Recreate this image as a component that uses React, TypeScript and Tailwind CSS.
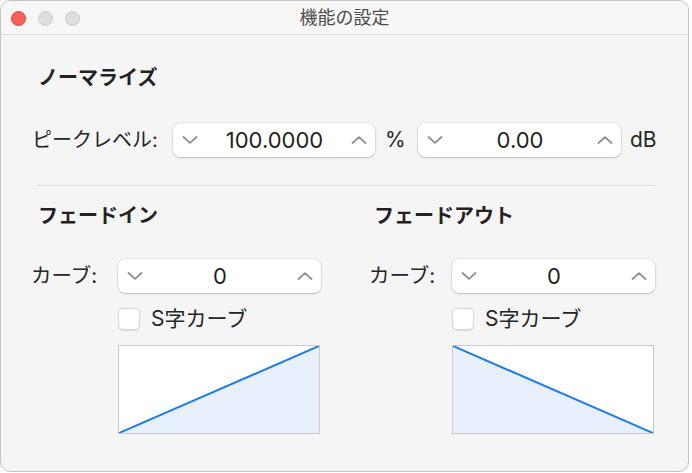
import React from 'react';

const font = { fontFamily: 'Inter, "Noto Sans CJK JP", sans-serif' };

function Chevron({ up }: { up?: boolean }) {
  return (
    <svg viewBox="0 0 16 8" className="w-4 h-2" fill="none">
      <path
        d={up ? 'M1.5 7L8 1.2 14.5 7' : 'M1.5 1L8 6.8 14.5 1'}
        stroke="#8e8e8e"
        strokeWidth="1.8"
        strokeLinecap="round"
        strokeLinejoin="round"
      />
    </svg>
  );
}

function Stepper({ value, width }: { value: string; width: string }) {
  return (
    <div
      className={`${width} h-[34px] bg-white rounded-[7px] flex items-center justify-between pl-[9px] pr-[8px] shadow-[0_0_0_0.5px_rgba(0,0,0,0.12),0_1px_2px_rgba(0,0,0,0.18)]`}
    >
      <Chevron />
      <span className="text-[22px] text-[#1f1f1f] leading-none">{value}</span>
      <Chevron up />
    </div>
  );
}

function Graph({ rising }: { rising?: boolean }) {
  return (
    <div className="w-[202px] h-[89px] border-[1.5px] border-[#c9c9c9] bg-white">
      <svg viewBox="0 0 199 86" className="w-full h-full block" preserveAspectRatio="none">
        <polygon
          points={rising ? '0,86 199,0 199,86' : '0,0 199,86 0,86'}
          fill="#e8f0fd"
        />
        <line
          x1="0"
          y1={rising ? 86 : 0}
          x2="199"
          y2={rising ? 0 : 86}
          stroke="#1b7bf4"
          strokeWidth="2"
        />
      </svg>
    </div>
  );
}

function FadeColumn({
  title,
  headingOffset,
  labelWidth,
  bodyOffset,
  rising,
}: {
  title: string;
  headingOffset: string;
  labelWidth: string;
  bodyOffset: string;
  rising?: boolean;
}) {
  return (
    <div className="flex flex-col">
      <h3 className={`${headingOffset} text-[20px] font-bold leading-[24px] text-[#222]`}>{title}</h3>
      <div className="flex items-center mt-[31px]">
        <span className={`${labelWidth} text-[20.5px] text-[#262626]`}>カーブ:</span>
        <Stepper value="0" width="w-[203px]" />
      </div>
      <div className={`flex flex-col ${bodyOffset}`}>
        <label className="flex items-center mt-[15px] h-[22px]">
          <span className="w-[22px] h-[22px] bg-white rounded-[5px] border border-[#d6d6d6] shadow-[0_0.5px_1px_rgba(0,0,0,0.1)]" />
          <span className="ml-[11px] text-[21px] text-[#262626]">S字カーブ</span>
        </label>
        <div className="mt-[15px]">
          <Graph rising={rising} />
        </div>
      </div>
    </div>
  );
}

export default function App() {
  return (
    <div className="w-[692px] h-[473px] bg-white" style={font}>
      <div className="w-[689px] h-[472px] rounded-[10px] border border-[#c4c4c4] bg-[#f5f5f5] overflow-hidden flex flex-col">
        {/* Title bar */}
        <div className="relative h-[34px] shrink-0 bg-[#f7f7f7] border-b border-[#dcdcdc] flex items-center justify-center">
          <div className="absolute left-[10px] top-[10px] flex gap-[12px]">
            <span className="w-[15px] h-[15px] rounded-full bg-[#fe5f57] border border-[#e0443e]" />
            <span className="w-[15px] h-[15px] rounded-full bg-[#dedede] border border-[#cdcdcd]" />
            <span className="w-[15px] h-[15px] rounded-full bg-[#dedede] border border-[#cdcdcd]" />
          </div>
          <span className="text-[18px] leading-none text-[#4d4d4d]">機能の設定</span>
        </div>

        {/* Normalize */}
        <h2 className="ml-[37px] mt-[31px] text-[20px] font-bold leading-[24px] text-[#222]">ノーマライズ</h2>
        <div className="flex items-center mt-[33px] pl-[31px]">
          <span className="w-[141px] text-[20px] text-[#262626]">ピークレベル:</span>
          <Stepper value="100.0000" width="w-[202px]" />
          <span className="w-[43px] pl-[10px] text-[21px] text-[#262626]">%</span>
          <Stepper value="0.00" width="w-[203px]" />
          <span className="ml-[9px] text-[21px] text-[#262626]">dB</span>
        </div>

        <div className="ml-[36px] w-[618px] h-px bg-[#dadada] mt-[28px]" />

        {/* Fade in / out */}
        <div className="flex mt-[18px]">
          <div className="w-[337px] pl-[30px]">
            <FadeColumn
              title="フェードイン"
              headingOffset="ml-[7px]"
              labelWidth="w-[87px]"
              bodyOffset="ml-[87px]"
              rising
            />
          </div>
          <div className="pl-[31px]">
            <FadeColumn
              title="フェードアウト"
              headingOffset="ml-[5px]"
              labelWidth="w-[83px]"
              bodyOffset="ml-[83px]"
            />
          </div>
        </div>
      </div>
    </div>
  );
}
